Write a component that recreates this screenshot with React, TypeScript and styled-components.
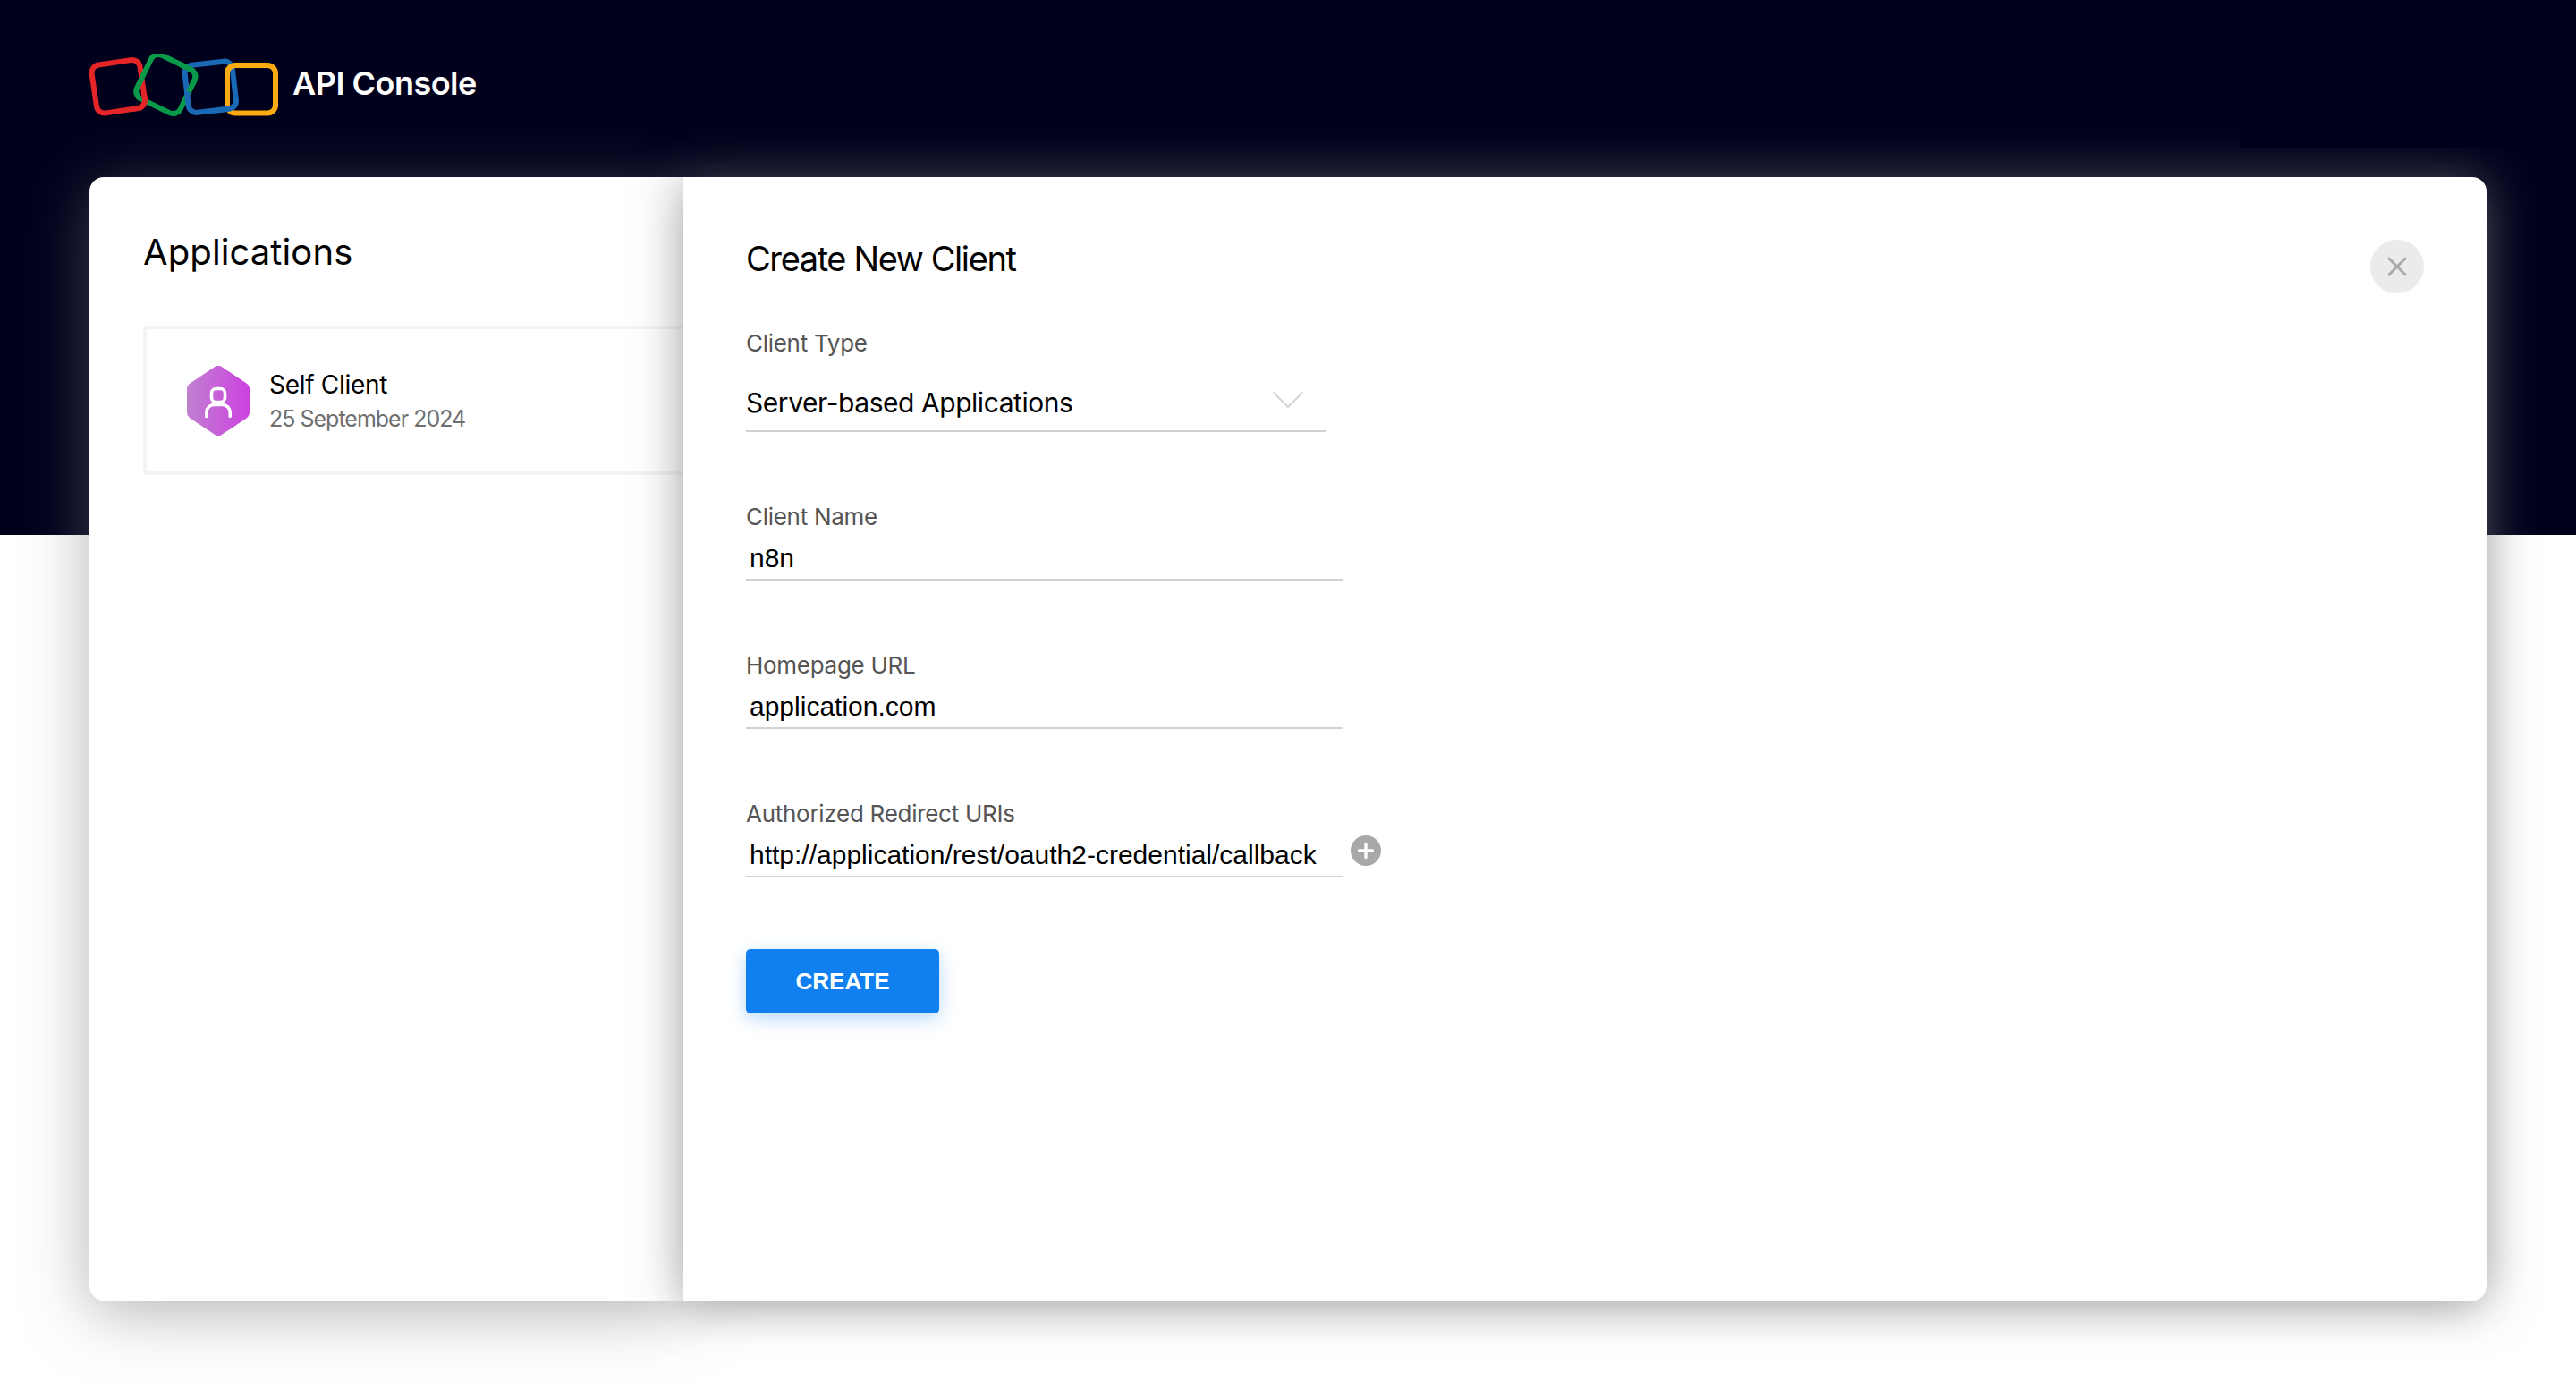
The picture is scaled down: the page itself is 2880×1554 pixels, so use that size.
import React from "react";
import styled, { createGlobalStyle } from "styled-components";

const GlobalStyle = createGlobalStyle`
  html, body {
    margin: 0;
    padding: 0;
    background: #fff;
  }
  * {
    box-sizing: border-box;
  }
`;

const NAVY = "#00001c";

const Logo = () => (
  <svg width="212" height="72" viewBox="0 0 212 72" fill="none" strokeWidth="6">
    <defs>
      <clipPath id="redOver">
        <rect x="50" y="45" width="20" height="27" />
      </clipPath>
      <clipPath id="greenOver">
        <rect x="100" y="0" width="30" height="42" />
      </clipPath>
      <clipPath id="blueOver">
        <rect x="140" y="50" width="30" height="22" />
      </clipPath>
    </defs>
    <rect id="ringRed" x="5" y="9.5" width="54.5" height="54.5" rx="9" stroke="#e42527" transform="rotate(-8.5 32.3 36.7)" />
    <rect id="ringGreen" x="58.3" y="7" width="54" height="54" rx="9" stroke="#089949" transform="rotate(26 85.3 34)" />
    <rect id="ringBlue" x="108.5" y="10.5" width="53.5" height="53.5" rx="9" stroke="#1a69b4" transform="rotate(-6.5 135.3 37.3)" />
    <rect x="154" y="13" width="54" height="53.5" rx="9" stroke="#fbaa0f" />
    <use href="#ringRed" clipPath="url(#redOver)" />
    <use href="#ringGreen" clipPath="url(#greenOver)" />
    <use href="#ringBlue" clipPath="url(#blueOver)" />
  </svg>
);

const HexAvatar = () => (
  <svg width="70" height="78" viewBox="0 0 70 78" fill="none">
    <defs>
      <linearGradient id="hexFill" x1="0" y1="0" x2="1" y2="0">
        <stop offset="0" stopColor="#c080d0" />
        <stop offset="1" stopColor="#cc42e0" />
      </linearGradient>
    </defs>
    <path
      d="M30.5 1.4a8 8 0 0 1 9 0L66.5 19.6a8 8 0 0 1 3.5 6.6V51.8a8 8 0 0 1-3.5 6.6L39.5 76.6a8 8 0 0 1-9 0L3.5 58.4A8 8 0 0 1 0 51.8V26.2a8 8 0 0 1 3.5-6.6Z"
      fill="url(#hexFill)"
    />
    <rect x="27.5" y="25.5" width="15" height="15" rx="5" stroke="#fff" strokeWidth="3.6" />
    <path d="M21.8 56.5V52a8.5 8.5 0 0 1 8.5-8.5h9.4a8.5 8.5 0 0 1 8.5 8.5v4.5" stroke="#fff" strokeWidth="3.6" strokeLinecap="round" />
  </svg>
);

const Chevron = () => (
  <ChevronIcon width="36" height="20" viewBox="0 0 36 20" fill="none">
    <path d="M1.5 1.5 18 18 34.5 1.5" stroke="#d6d6d6" strokeWidth="2" />
  </ChevronIcon>
);

const PlusBadge = () => (
  <AddButton width="34" height="34" viewBox="0 0 34 34" fill="none">
    <circle cx="17" cy="17" r="17" fill="#a8a8a8" />
    <path d="M17 9.5v15M9.5 17h15" stroke="#fff" strokeWidth="3.4" strokeLinecap="round" />
  </AddButton>
);

const CloseIcon = () => (
  <svg width="22" height="22" viewBox="0 0 22 22" fill="none">
    <path d="M2 2 20 20M20 2 2 20" stroke="#aaaaaa" strokeWidth="3" strokeLinecap="round" />
  </svg>
);

const fields = [
  { label: "Client Name", value: "n8n" },
  { label: "Homepage URL", value: "application.com" },
  { label: "Authorized Redirect URIs", value: "http://application/rest/oauth2-credential/callback", add: true },
];

export default function App() {
  return (
    <Page>
      <GlobalStyle />
      <Header>
        <Brand>
          <Logo />
          <BrandName>API Console</BrandName>
        </Brand>
        <HeaderSlot />
      </Header>
      <Main>
        <Sidebar>
          <SidebarTitle>Applications</SidebarTitle>
          <AppItem>
            <HexAvatar />
            <div>
              <AppName>Self Client</AppName>
              <AppDate>25 September 2024</AppDate>
            </div>
          </AppItem>
        </Sidebar>
        <Panel>
          <CloseButton>
            <CloseIcon />
          </CloseButton>
          <PanelTitle>Create New Client</PanelTitle>
          <SelectField>
            <Label>Client Type</Label>
            <SelectRow>
              <span>Server-based Applications</span>
              <Chevron />
            </SelectRow>
          </SelectField>
          {fields.map((f) => (
            <Field key={f.label}>
              <Label>{f.label}</Label>
              <ValueRow>
                {f.value}
                {f.add && <PlusBadge />}
              </ValueRow>
            </Field>
          ))}
          <CreateButton>CREATE</CreateButton>
        </Panel>
      </Main>
    </Page>
  );
}

const Page = styled.div`
  position: relative;
  height: 1554px;
  overflow: hidden;
  background: linear-gradient(${NAVY} 598px, #fff 598px);
  font-family: Inter, "Liberation Sans", sans-serif;
`;

const Header = styled.header`
  position: relative;
  z-index: 2;
  display: flex;
  justify-content: space-between;
  height: 166px;
  padding-left: 100px;
`;

const Brand = styled.div`
  display: flex;
  align-items: center;
  gap: 15px;
  height: 72px;
  margin-top: 60px;
`;

const BrandName = styled.div`
  color: #fff;
  font-size: 36px;
  font-weight: 600;
  letter-spacing: -0.5px;
  line-height: 44px;
  margin-top: -6px;
`;

const HeaderSlot = styled.div`
  width: 376px;
  background: ${NAVY};
`;

const Main = styled.main`
  display: flex;
  height: 1256px;
  margin: 32px 100px 0;
`;

const Sidebar = styled.aside`
  width: 664px;
  flex: none;
  padding: 60px 0 0 60px;
  background: #fff;
  border-radius: 16px 0 0 16px;
  box-shadow: 0 12px 70px rgba(112, 112, 112, 0.54);
`;

const SidebarTitle = styled.h2`
  margin: 0 0 58px;
  font-size: 40px;
  font-weight: 400;
  line-height: 48px;
  letter-spacing: 0.1px;
  color: #000;
`;

const AppItem = styled.div`
  display: flex;
  align-items: center;
  gap: 22px;
  height: 167px;
  margin-right: -8px;
  padding-left: 45px;
  border: 4px solid #f3f3f3;
  border-radius: 4px;
`;

const AppName = styled.div`
  margin-bottom: 4px;
  font-size: 28px;
  line-height: 36px;
  letter-spacing: -0.3px;
  color: #000;
`;

const AppDate = styled.div`
  font-size: 25px;
  line-height: 32px;
  letter-spacing: -1px;
  color: #6f6f6f;
`;

const Panel = styled.section`
  position: relative;
  z-index: 1;
  flex: 1;
  padding: 67px 0 0 70px;
  background: #fff;
  border-radius: 0 16px 16px 0;
  box-shadow: 0 2px 56px rgba(120, 120, 120, 0.66), 0 20px 40px -10px rgba(120, 120, 120, 0.2);
`;

const CloseButton = styled.div`
  position: absolute;
  top: 70px;
  right: 70px;
  display: flex;
  align-items: center;
  justify-content: center;
  width: 60px;
  height: 60px;
  border-radius: 50%;
  background: #ebebeb;
`;

const PanelTitle = styled.h1`
  margin: 0 0 53px;
  font-size: 38px;
  font-weight: 400;
  line-height: 48px;
  letter-spacing: -1.4px;
  color: #000;
`;

const Label = styled.div`
  font-size: 26px;
  line-height: 36px;
  letter-spacing: -0.28px;
  color: #555;
`;

const SelectField = styled.div`
  width: 648px;
`;

const SelectRow = styled.div`
  position: relative;
  display: flex;
  align-items: center;
  height: 54px;
  margin-top: 27px;
  padding: 1px 0 11px;
  border-bottom: 2px solid #d2d2d2;
  font-size: 30px;
  line-height: 40px;
  letter-spacing: -0.45px;
  color: #000;
`;

const ChevronIcon = styled.svg`
  position: absolute;
  right: 24px;
  top: 8px;
`;

const Field = styled.div`
  width: 668px;
  margin-top: 77px;
`;

const ValueRow = styled.div`
  position: relative;
  height: 45px;
  margin-top: 8px;
  padding: 0 0 3px 4px;
  border-bottom: 2px solid #d2d2d2;
  font-family: "Liberation Sans", Arial, sans-serif;
  font-size: 30px;
  line-height: 40px;
  color: #000;
  white-space: nowrap;
`;

const AddButton = styled.svg`
  position: absolute;
  left: 676px;
  top: -2px;
`;

const CreateButton = styled.button`
  display: block;
  width: 216px;
  height: 72px;
  margin-top: 80px;
  padding: 0;
  border: 0;
  border-radius: 5px;
  background: #1080f0;
  box-shadow: 0 6px 20px rgba(16, 128, 240, 0.3);
  color: #fff;
  font-family: "Liberation Sans", Arial, sans-serif;
  font-size: 26px;
  font-weight: 700;
`;
